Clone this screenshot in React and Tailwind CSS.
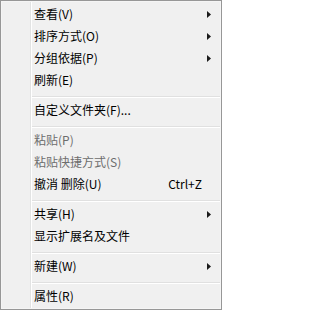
import React from "react";

const items = [
  { label: "查看(V)", sub: true },
  { label: "排序方式(O)", sub: true },
  { label: "分组依据(P)", sub: true },
  { label: "刷新(E)" },
  { sep: true },
  { label: "自定义文件夹(F)..." },
  { sep: true },
  { label: "粘贴(P)", disabled: true },
  { label: "粘贴快捷方式(S)", disabled: true },
  { label: "撤消 删除(U)", shortcut: "Ctrl+Z" },
  { sep: true },
  { label: "共享(H)", sub: true },
  { label: "显示扩展名及文件" },
  { sep: true },
  { label: "新建(W)", sub: true },
  { sep: true },
  { label: "属性(R)" },
];

const Arrow = () => (
  <svg width="4" height="7" viewBox="0 0 4 7">
    <polygon points="0,0 4,3.5 0,7" fill="#1b1b1b" />
  </svg>
);

const MenuRow = ({ item }) => {
  if (item.sep) {
    return (
      <div className="h-[8px] pt-[5px]">
        <div className="border-t border-b border-t-[#e0e0e0] border-b-white" />
      </div>
    );
  }

  return (
    <div className="flex items-center h-[22px] pl-[2px] pr-[9px]">
      <span
        className={`flex-1 whitespace-nowrap ${
          item.disabled ? "text-[#6d6d6d]" : "text-black"
        }`}
      >
        {item.label}
      </span>
      {item.shortcut && (
        <span className="mr-[5px] whitespace-nowrap text-black">{item.shortcut}</span>
      )}
      <span className="w-[4px] flex items-center">{item.sub && <Arrow />}</span>
    </div>
  );
};

export default function App() {
  return (
    <div
      className="w-[222px] h-[310px] border border-[#979797] bg-[#f0f0f0] text-[12px] leading-none"
      style={{ fontFamily: '"Noto Sans CJK SC", "Noto Sans", sans-serif' }}
    >
      <div className="h-full flex border border-[#f5f5f5]">
        <div className="w-[28px] shrink-0" />
        <div className="w-[2px] shrink-0 border-l border-r border-l-[#e2e3e3] border-r-white" />
        <div className="flex-1 pt-[1px] pb-[1px]">
          {items.map((item, i) => (
            <MenuRow key={i} item={item} />
          ))}
        </div>
      </div>
    </div>
  );
}
